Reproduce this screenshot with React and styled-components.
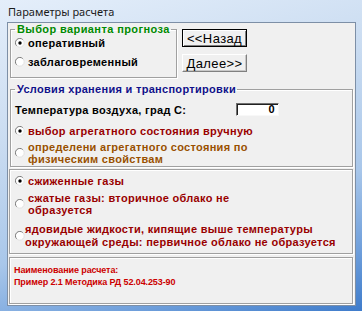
import React from 'react';
import styled, { createGlobalStyle } from 'styled-components';

const Global = createGlobalStyle`
  html, body { margin: 0; padding: 0; }
  body { width: 362px; height: 311px; overflow: hidden; background: #ffffff; }
  * { box-sizing: border-box; }
`;

const Window = styled.div`
  width: 362px;
  height: 311px;
  display: flex;
  flex-direction: column;
  background: linear-gradient(165deg, #e4eefa 0%, #cadcf1 35%, #a9c7ea 65%, #6f9fdb 85%, #3f7ccb 100%);
`;

const TitleBar = styled.div`
  height: 22px;
  flex: none;
  display: flex;
  align-items: center;
  padding-left: 8px;
  font-family: "Noto Sans", "Open Sans", sans-serif;
  font-size: 11px;
  color: #1b1b1b;
`;

const Frame = styled.div`
  flex: 1;
  display: flex;
  padding: 0 6px 5px 7px;
`;

const Client = styled.div`
  flex: 1;
  display: flex;
  flex-direction: column;
  background: #f0f0f0;
  border: 1px solid #7d8fa6;
  font-family: "Liberation Sans", Arial, sans-serif;
  font-weight: bold;
  font-size: 11px;
  letter-spacing: 0.3px;
  color: #000;
`;

const TopRow = styled.div`
  display: flex;
  align-items: flex-start;
  padding-left: 2px;
`;

const GroupBox = styled.fieldset`
  margin: ${p => p.$mt || 0}px 2px 0 ${p => (p.$ml !== undefined ? p.$ml : 2)}px;
  padding: 0 0 ${p => p.$pb || 0}px 4px;
  width: ${p => (p.$w ? `${p.$w}px` : 'auto')};
  border: 1px solid #a0a0a0;
  box-shadow: inset 1px 1px 0 #ffffff, 1px 1px 0 #ffffff;
  min-width: 0;
  flex: none;
`;

const Legend = styled.legend`
  margin-left: 0px;
  padding: 0 1px 0 2px;
  line-height: 13px;
  white-space: nowrap;
  letter-spacing: ${p => p.$ls || 0.3}px;
  color: ${p => p.$color};
`;

const Panel = styled.div`
  margin: ${p => p.$mt}px 2px ${p => p.$mb || 0}px 1px;
  padding: ${p => p.$pt}px 0 ${p => p.$pb || 0}px ${p => p.$pl}px;
  border: 1px solid #a0a0a0;
  box-shadow: inset 1px 1px 0 #ffffff, 1px 1px 0 #ffffff;
  display: flex;
  flex-direction: column;
  flex: ${p => (p.$grow ? 1 : 'none')};
`;

const RadioRow = styled.div`
  display: flex;
  align-items: center;
  gap: ${p => (p.$gap !== undefined ? p.$gap : 3)}px;
  margin-top: ${p => p.$mt || 0}px;
  min-height: 14px;
  color: ${p => p.$color || '#000'};
`;

const RadioText = styled.span`
  white-space: nowrap;
  line-height: ${p => p.$lh || 14}px;
`;

const RadioIconBox = styled.svg`
  flex: none;
  display: block;
`;

const RadioIcon = ({ checked }) => (
  <RadioIconBox width="10" height="10" viewBox="0 0 10 10">
    <circle cx="5" cy="5" r="4.3" fill="#ffffff" />
    <path d="M1.7 7.9 A4.3 4.3 0 0 1 7.9 1.7" stroke="#7a7a7a" strokeWidth="1" fill="none" />
    <path d="M7.9 1.7 A4.3 4.3 0 0 1 1.7 7.9" stroke="#e0e0e0" strokeWidth="1" fill="none" />
    {checked && <circle cx="5" cy="5" r="1.7" fill="#000000" />}
  </RadioIconBox>
);

const Radio = ({ checked, children, color, mt, gap, lh }) => (
  <RadioRow $color={color} $mt={mt} $gap={gap}>
    <RadioIcon checked={checked} />
    <RadioText $lh={lh}>{children}</RadioText>
  </RadioRow>
);

const ButtonCol = styled.div`
  display: flex;
  flex-direction: column;
  gap: 7px;
  padding-top: 6px;
  margin-left: 3px;
`;

const Button = styled.div`
  width: 65px;
  height: 18px;
  display: flex;
  align-items: center;
  justify-content: center;
  background: #f0f0f0;
  font-weight: normal;
  font-size: 13px;
  letter-spacing: 0.4px;
  color: #000;
  border: 1px solid;
  border-color: ${p => (p.$default ? '#000 #000 #000 #000' : '#ffffff #808080 #808080 #ffffff')};
  box-shadow: ${p =>
    p.$default
      ? 'inset 1px 1px 0 #ffffff, inset -1px -1px 0 #808080'
      : 'inset -1px -1px 0 #c8c8c8'};
`;

const TempRow = styled.div`
  display: flex;
  align-items: center;
  margin-top: 7px;
`;

const TempLabel = styled.span`
  width: 221px;
  white-space: nowrap;
`;

const Input = styled.div`
  width: 43px;
  height: 13px;
  background: #ffffff;
  border-style: solid;
  border-width: 1px;
  border-color: #707070 #f8f8f8 #f8f8f8 #707070;
  box-shadow: inset 1px 1px 0 #202020;
  text-align: right;
  padding-right: 3px;
  line-height: 11px;
  font-size: 11px;
`;

const Note = styled.div`
  font-size: 9px;
  letter-spacing: -0.1px;
  line-height: 12px;
  color: #cc0000;
  white-space: nowrap;
`;

export default function App() {
  return (
    <>
      <Global />
      <Window>
        <TitleBar>Параметры расчета</TitleBar>
        <Frame>
          <Client>
            <TopRow>
              <GroupBox $w={167} $pb={8} $ml={0}>
                <Legend $color="#008a00" $ls={0.4}>Выбор варианта прогноза</Legend>
                <Radio checked mt={0}>оперативный</Radio>
                <Radio mt={5}>заблаговременный</Radio>
              </GroupBox>
              <ButtonCol>
                <Button $default>&lt;&lt;Назад</Button>
                <Button>Далее&gt;&gt;</Button>
              </ButtonCol>
            </TopRow>
            <GroupBox $mt={5} $pb={1}>
              <Legend $color="#10108a">Условия хранения и транспортировки</Legend>
              <TempRow>
                <TempLabel>Температура воздуха, град С:</TempLabel>
                <Input>0</Input>
              </TempRow>
              <Radio checked mt={8} color="#990000">выбор агрегатного состояния вручную</Radio>
              <Radio mt={3} color="#995000" lh={12}>
                определени агрегатного состояния по<br />физическим свойствам
              </Radio>
            </GroupBox>
            <Panel $mt={2} $pt={4} $pl={5} $pb={5}>
              <Radio checked color="#990000">сжиженные газы</Radio>
              <Radio mt={4} color="#990000" lh={12}>
                сжатые газы: вторичное облако не<br />образуется
              </Radio>
              <Radio mt={7} color="#990000" lh={12.5} gap={0}>
                ядовидые жидкости, кипящие выше температуры<br />окружающей среды: первичное облако не образуется
              </Radio>
            </Panel>
            <Panel $mt={3} $pt={6} $pl={4} $mb={1} $grow>
              <Note>Наименование расчета:</Note>
              <Note>Пример 2.1 Методика РД 52.04.253-90</Note>
            </Panel>
          </Client>
        </Frame>
      </Window>
    </>
  );
}
